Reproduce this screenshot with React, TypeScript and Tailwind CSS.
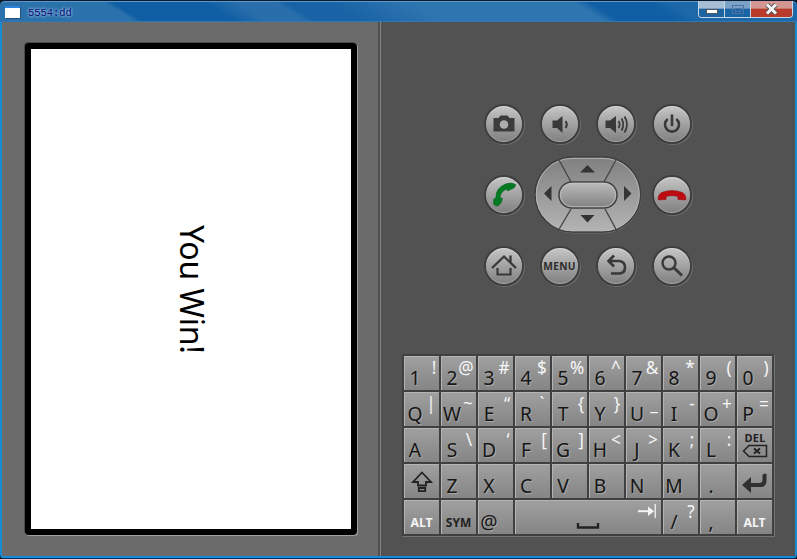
import React from "react";

type KeyDef = {
  main?: string;
  alt?: string;
  // horizontal centre of the secondary glyph inside the key
  at?: number;
  kind?: "alt" | "sym" | "del" | "shift" | "enter" | "space";
};

const rows: KeyDef[][] = [
  [
    { main: "1", alt: "!", at: 29.5 },
    { main: "2", alt: "@", at: 25 },
    { main: "3", alt: "#", at: 26 },
    { main: "4", alt: "$", at: 27 },
    { main: "5", alt: "%", at: 24.7 },
    { main: "6", alt: "^", at: 27 },
    { main: "7", alt: "&", at: 25.7 },
    { main: "8", alt: "*", at: 27 },
    { main: "9", alt: "(", at: 29 },
    { main: "0", alt: ")", at: 29 },
  ],
  [
    { main: "Q", alt: "|", at: 27 },
    { main: "W", alt: "~", at: 27 },
    { main: "E", alt: "“", at: 28.7 },
    { main: "R", alt: "`", at: 26.7 },
    { main: "T", alt: "{", at: 28.7 },
    { main: "Y", alt: "}", at: 28.3 },
    { main: "U", alt: "_", at: 28 },
    { main: "I", alt: "-", at: 29 },
    { main: "O", alt: "+", at: 26.7 },
    { main: "P", alt: "=", at: 27 },
  ],
  [
    { main: "A" },
    { main: "S", alt: "\\", at: 28.3 },
    { main: "D", alt: "‘", at: 30.3 },
    { main: "F", alt: "[", at: 29.3 },
    { main: "G", alt: "]", at: 29 },
    { main: "H", alt: "<", at: 26.7 },
    { main: "J", alt: ">", at: 27 },
    { main: "K", alt: ";", at: 29 },
    { main: "L", alt: ":", at: 29.3 },
    { kind: "del" },
  ],
  [
    { kind: "shift" },
    { main: "Z" },
    { main: "X" },
    { main: "C" },
    { main: "V" },
    { main: "B" },
    { main: "N" },
    { main: "M" },
    { main: "." },
    { kind: "enter" },
  ],
  [
    { kind: "alt" },
    { kind: "sym" },
    { main: "@" },
    { kind: "space" },
    { main: "/", alt: "?", at: 28 },
    { main: "," },
    { kind: "alt" },
  ],
];

function KeyFace({ k }: { k: KeyDef }) {
  switch (k.kind) {
    case "alt":
      return (
        <span className="scale-x-[.94] pt-[14px] text-center text-[13px] leading-[17px] font-bold text-[#f4f4f4]">
          ALT
        </span>
      );
    case "sym":
      return (
        <span className="scale-x-[.92] pt-[14px] text-center text-[13px] leading-[17px] font-bold text-[#222]">
          SYM
        </span>
      );
    case "del":
      return (
        <span className="flex flex-col items-center pt-[3px] pl-px text-[11px] leading-[13px] font-bold tracking-[0.2px] text-[#222]">
          DEL
          <svg width="26" height="14" viewBox="0 0 26 14" fill="none" stroke="#222">
            <path d="M7 1.500H24.500V12.500H7L1.500 7Z" strokeWidth="1.500" />
            <path d="M12 4.500L18 9.500M18 4.500L12 9.500" strokeWidth="2" />
          </svg>
        </span>
      );
    case "shift":
      return (
        <svg width="35" height="34" viewBox="0 0 35 34" fill="none" stroke="#222" strokeWidth="1.800">
          <path d="M18 8.500L27 18H22V21.500H14V18H9Z" />
          <path d="M14.800 24H21.200V27.200H14.800Z" />
        </svg>
      );
    case "enter":
      return (
        <svg width="35" height="34" viewBox="0 0 35 34">
          <path d="M5 21L14 13V19H22Q25.500 19 25.500 16V11Q27.500 8.500 29.500 10V17Q29.500 23 23 23H14V29Z" fill="#303030" />
        </svg>
      );
    case "space":
      return (
        <svg width="146" height="34" viewBox="0 0 146 34" fill="none">
          <path d="M63 23V27.500H83V23" stroke="#242424" strokeWidth="2.400" />
          <path d="M123 11.200H136" stroke="#f4f4f4" strokeWidth="2" />
          <path d="M133 6.500L139 11.200L133 16Z" fill="#f4f4f4" />
          <path d="M140.200 4V18" stroke="#f4f4f4" strokeWidth="1.300" />
        </svg>
      );
    default:
      return (
        <>
          <span className="col-start-1 row-start-1 mt-[7px] h-[27px] w-[22px] scale-x-[.94] text-center text-[20.5px] leading-[29px] text-[#161616] [text-shadow:1px_1px_0_#a8a8a8]">
            {k.main}
          </span>
          {k.alt && (
            <span
              className="col-start-1 row-start-1 h-[22px] w-[20px] scale-x-[.95] text-center text-[18px] leading-[22px] text-[#f6f6f6]"
              style={{ marginLeft: (k.at ?? 27) - 10 }}
            >
              {k.alt}
            </span>
          )}
        </>
      );
  }
}

function Keyboard() {
  return (
    <div className="mt-[68px] ml-[21px] flex h-[182px] w-[372px] flex-col gap-[2px] bg-[#404040] p-[2px] shadow-[1px_1px_0_#747474]">
      {rows.map((row, r) => (
        <div key={r} className="flex h-[34px] gap-[2px]">
          {row.map((k, i) => (
            <div
              key={i}
              className={`grid h-[34px] shrink-0 bg-linear-to-b from-[#a0a0a0] to-[#858585] shadow-[inset_1px_1px_0_#b4b4b4] ${
                k.kind === "space" ? "w-[146px]" : "w-[35px]"
              }`}
            >
              <KeyFace k={k} />
            </div>
          ))}
        </div>
      ))}
    </div>
  );
}

function Round({ children }: { children: React.ReactNode }) {
  return (
    <div className="flex size-[40px] items-center justify-center rounded-full border-2 border-[#3f3f3f] bg-linear-to-b from-[#c6c6c6] to-[#808080] shadow-[1px_1px_0_#6c6c6c,inset_0_1px_0_#dcdcdc,inset_0_-1px_0_#a8a8a8]">
      {children}
    </div>
  );
}

const iconProps = { width: 36, height: 36, viewBox: "0 0 36 36", fill: "none", className: "shrink-0" };

function DPad() {
  return (
    <svg width="108" height="78" viewBox="0 0 108 78">
      <defs>
        <linearGradient id="pad" x1="0" y1="0" x2="0" y2="1">
          <stop offset="0" stopColor="#808080" />
          <stop offset="1" stopColor="#b4b4b4" />
        </linearGradient>
        <linearGradient id="ok" x1="0" y1="0" x2="0" y2="1">
          <stop offset="0" stopColor="#bdbdbd" />
          <stop offset="1" stopColor="#808080" />
        </linearGradient>
      </defs>
      <rect x="2" y="2" width="105" height="75" rx="37.500" fill="none" stroke="#707070" />
      <rect x="1" y="1" width="105.500" height="75" rx="37.500" fill="url(#pad)" stroke="#3d3d3d" strokeWidth="1.500" />
      <rect x="2.300" y="2.300" width="103" height="72.400" rx="36" fill="none" stroke="#b8b8b8" strokeWidth=".9" />
      <path d="M24.500 3L37 26M82.500 3L70 26M37 53L24 75M71 53L83 75" stroke="#484848" strokeWidth="1.400" />
      <rect x="25" y="26" width="58" height="26" rx="13" fill="url(#ok)" stroke="#424242" strokeWidth="1.600" />
      <rect x="26.300" y="27.300" width="55.400" height="23.400" rx="11.700" fill="none" stroke="#c5c5c5" strokeWidth=".8" />
      <path d="M46 16.500L53.500 9L61 16.500ZM46.500 59H60.500L53.500 66.500ZM17.500 30V45L10 37.500ZM90 30V45L97.500 37.500Z" fill="#343434" />
    </svg>
  );
}

function Controls() {
  return (
    <div className="ml-[102.5px] grid h-[182px] w-[208px] grid-cols-[40px_128px_40px] grid-rows-[40px_40px_40px] content-start gap-y-[31px]">
      <div className="col-span-3 flex justify-between">
        <Round>
          <svg {...iconProps}>
            <path d="M7.500 12H12.500L14.500 9.500H21.500L23.500 12H28.500V25.500H7.500Z" fill="#3c3c3c" />
            <circle cx="18" cy="18.500" r="4.300" fill="#adadad" />
          </svg>
        </Round>
        <Round>
          <svg {...iconProps}>
            <path d="M10.500 14.500H15L20.500 10V27L15 22H10.500Z" fill="#393939" />
            <path d="M23.500 15Q26 18.500 23.500 22" stroke="#393939" strokeWidth="2" />
          </svg>
        </Round>
        <Round>
          <svg {...iconProps}>
            <path d="M7.500 14.500H12L18 10V27L12 22H7.500Z" fill="#393939" />
            <path d="M20.500 15Q22.800 18.500 20.500 22M23.500 12.500Q27 18.500 23.500 24.500M26.500 10.500Q31.500 18.500 26.500 26.500" stroke="#393939" strokeWidth="1.800" />
          </svg>
        </Round>
        <Round>
          <svg {...iconProps}>
            <path d="M13.800 13A7 7 0 1 0 22.200 13M18 8.500V20" stroke="#393939" strokeWidth="2.600" />
          </svg>
        </Round>
      </div>
      <Round>
        <svg {...iconProps}>
          <path d="M7.500 22.500L10 20.500Q9.500 11 19.500 7Q25 5 29.500 7.500Q30 9 28 11L21.500 14L20.500 12Q14.500 15 14 20.500L16.500 21.500Q16 26 12 29Q9 29.500 7.500 27Z" fill="#047a22" stroke="#075f20" strokeWidth=".5" />
        </svg>
      </Round>
      <div className="-mt-[19px] ml-[10px] h-[78px] w-[108px]">
        <DPad />
      </div>
      <Round>
        <svg {...iconProps}>
          <path d="M4.300 23Q3.500 18 7.500 15.500Q18 11.500 28.500 15.500Q32.500 18 31.700 23L24 22.500L23.500 19.300Q18 18 12.500 19.300L12 22.500Z" fill="#bd0c12" stroke="#8c1114" strokeWidth=".5" />
        </svg>
      </Round>
      <div className="col-span-3 flex justify-between">
        <Round>
          <svg {...iconProps} stroke="#393939">
            <path d="M6 20L18 8.500L30 20M24.500 14V7.500" strokeWidth="2.300" />
            <path d="M11.500 20V26.500H24.500V20" strokeWidth="2.200" />
          </svg>
        </Round>
        <Round>
          <span className="scale-x-[.93] text-[11px] font-bold tracking-[0.3px] text-[#2e2e2e]">MENU</span>
        </Round>
        <Round>
          <svg {...iconProps} stroke="#393939">
            <path d="M16 7.500L10.500 13L16 18.500M11 13H21Q27 13.500 27 19.300Q27 25.500 21 25.500H13" strokeWidth="2.600" />
          </svg>
        </Round>
        <Round>
          <svg {...iconProps} stroke="#393939">
            <circle cx="15" cy="15" r="6.500" strokeWidth="2.400" />
            <path d="M19.500 19.500L28 27.500" strokeWidth="3" />
          </svg>
        </Round>
      </div>
    </div>
  );
}

function TitleBar() {
  return (
    <header className="flex h-[22px] items-start justify-between rounded-t-[5px] border-t border-t-[#0a1a30] bg-[linear-gradient(32deg,#2b71ab_0px,#2b71ab_72px,#105fa4_76px,#105fa4_125px,#2a6fac_143px,#2a6fac_162px,#1862a5_168px,#1862a5_190px,#2f75b0_235px,#2f75b0_321px,#105fa4_329px,#105fa4_360px,#1c68a9_372px)] shadow-[inset_0_1px_0_#5d9aca,inset_0_-1px_0_#2f78b5]">
      <div className="flex items-start pt-[5px] pl-[5px]">
        <div className="h-[12px] w-[15px] border-t-2 border-[#2c83de] bg-white shadow-[1px_1px_0_#24527e]" />
        <span className="ml-[8px] pt-px font-['Liberation_Mono'] text-[10.4px] leading-[13px] text-[#050b78] [text-shadow:0_0_3px_#a8c9e4,0_0_3px_#a8c9e4]">
          5554:dd
        </span>
      </div>
      <div className="mr-[4px] flex h-[17px] w-[95px] overflow-hidden rounded-b-[4px] border border-t-0 border-[#c9d8e6]">
        <div className="flex w-[26px] items-center justify-center border-r border-[#c9d8e6] bg-linear-to-b from-[#a7bfd5] from-45% to-[#1c65a2] to-50%">
          <div className="mt-[4px] h-[5px] w-[12px] border border-[#555] bg-white" />
        </div>
        <div className="flex w-[26px] items-center justify-center border-r border-[#c9d8e6] bg-linear-to-b from-[#79a2c6] from-45% to-[#1a65a5] to-50%">
          <div className="mt-[1px] flex h-[9px] w-[12px] items-center justify-center border border-[#4b74a4]">
            <div className="h-[4px] w-[6px] border border-[#4b74a4]" />
          </div>
        </div>
        <div className="flex flex-1 items-center justify-center bg-linear-to-b from-[#d49690] from-45% to-[#b93b2c] to-50%">
          <svg width="15" height="12" viewBox="0 0 15 12">
            <path d="M3 1.500L12 10.500M12 1.500L3 10.500" stroke="#555" strokeWidth="4.800" />
            <path d="M3 1.500L12 10.500M12 1.500L3 10.500" stroke="#f5f5f5" strokeWidth="3" />
          </svg>
        </div>
      </div>
    </header>
  );
}

export default function App() {
  return (
    <div className="h-[559px] w-[797px] overflow-hidden bg-[#101820] font-['Noto_Sans','Open_Sans',sans-serif]">
      <div className="flex h-[559px] w-[797px] flex-col overflow-hidden rounded-[5px] bg-[#0b2f63]">
        <TitleBar />
        <main className="flex h-[536px] border-x-2 border-b-2 border-[#168bd4]">
          <section className="w-[376px] bg-[#6b6b6b] pt-[21px] pl-[23px]">
            <div className="flex h-[492px] w-[332px] items-center justify-center rounded-[4px] border-[6px] border-black bg-white shadow-[1px_1px_0_#a0a0a0,-1px_-1px_0_#4b4b4b]">
              <span className="ml-[2px] text-[32px] leading-[40px] tracking-[-0.2px] text-black [writing-mode:vertical-rl]">
                You Win!
              </span>
            </div>
          </section>
          <div className="w-[3px] border-r border-[#858585] bg-[#505050]" />
          <section className="flex-1 bg-[#525252] pt-[82px]">
            <Controls />
            <Keyboard />
          </section>
        </main>
      </div>
    </div>
  );
}
